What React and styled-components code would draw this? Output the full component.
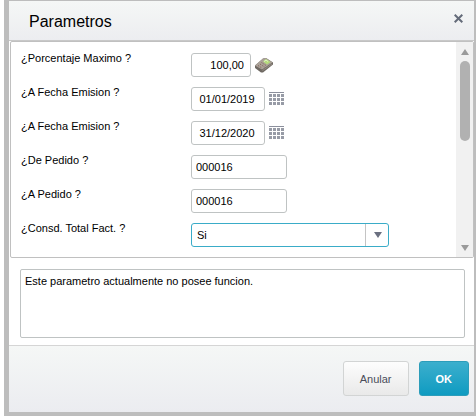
import React, {useState} from 'react'
import styled, {createGlobalStyle} from 'styled-components'

const GlobalStyle = createGlobalStyle`
  * {
    box-sizing: border-box;
  }
  body {
    margin: 0;
    background: #fff;
    color: #000;
    font-family: 'Liberation Sans', Arial, sans-serif;
    font-size: 11px;
  }
  button, input, select, textarea {
    margin: 0;
    color: inherit;
    font: inherit;
    outline: none;
  }
`

const Dialog = styled.div`
  margin-left: 4px;
  border: solid #bdbdbd;
  border-width: 1px 2px 4px 5px;
`

const Header = styled.header`
  display: flex;
  align-items: center;
  justify-content: space-between;
  height: 40px;
  padding: 2px 11px 0 20px;
  border-bottom: 1px solid #c8c8c8;
  background: linear-gradient(#f5f7f6, #ecedf0);
`

const Title = styled.h1`
  margin: 0;
  font-size: 16px;
  font-weight: normal;
  line-height: 20px;
`

const CloseButton = styled.button`
  display: flex;
  padding: 0 0 6px;
  border: 0;
  background: none;
  cursor: pointer;
`

const Params = styled.div`
  display: flex;
  margin-left: 1px;
  border: 1px solid #c0c0c0;
  border-radius: 2px;
`

const Fields = styled.form`
  display: flex;
  flex: 1;
  flex-direction: column;
  gap: 10px;
  min-width: 0;
  padding: 11px 10px 10px;
`

const Row = styled.div`
  display: grid;
  grid-template-columns: 170px 1fr;
`

const Label = styled.label`
  line-height: 10px;
`

const Control = styled.div`
  display: flex;
  align-items: center;
  gap: 4px;
`

const TextInput = styled.input`
  width: ${props => props.$width}px;
  height: 24px;
  padding: 0 6px 0 4px;
  border: 1px solid #bfc3c3;
  border-radius: 3px;
  background: #fff;
  text-align: ${props => props.$align || 'left'};
`

const IconButton = styled.button`
  display: flex;
  padding: 0;
  border: 0;
  background: none;
  cursor: pointer;
`

const SelectBox = styled.div`
  display: grid;
  grid-template-columns: 1fr 23px;
  width: 198px;
  height: 24px;
  border: 1px solid #3aacc8;
  border-radius: 3px;
`

const Select = styled.select`
  grid-area: 1 / 1 / 2 / 3;
  padding: 0 5px;
  border: 0;
  background: none;
  appearance: none;
`

const SelectArrow = styled.span`
  display: flex;
  grid-area: 1 / 2 / 2 / 3;
  align-items: center;
  justify-content: center;
  padding-left: 2px;
  border-left: 1px solid #c4c4c4;
  pointer-events: none;
`

const ScrollBar = styled.div`
  display: flex;
  flex-direction: column;
  align-items: center;
  width: 17px;
  background: #f1f1f1;
`

const ScrollButton = styled.button`
  display: flex;
  align-items: center;
  justify-content: center;
  width: 17px;
  height: 19px;
  padding: 0;
  border: 0;
  background: none;
`

const ScrollTrack = styled.div`
  flex: 1;
`

const ScrollThumb = styled.div`
  width: 10px;
  height: 80px;
  border-radius: 5px;
  background: #b1b1b1;
`

const Description = styled.div`
  padding: 11px 9px 7px 11px;
`

const DescriptionText = styled.textarea`
  display: block;
  width: 100%;
  height: 69px;
  padding: 5px 4px;
  border: 1px solid #bfc3c3;
  border-radius: 2px;
  line-height: 12px;
  resize: none;
`

const Footer = styled.footer`
  display: flex;
  justify-content: flex-end;
  gap: 10px;
  padding: 15px 5px 16px;
  border-top: 1px solid #d5d5d5;
  background: linear-gradient(#f5f7f6, #ebecf0);
`

const Button = styled.button`
  height: 35px;
  padding: 0 16px;
  border: 1px solid ${props => (props.$primary ? '#2c9dba' : '#d2d4d4')};
  border-radius: 3px;
  background: ${props =>
    props.$primary
      ? 'linear-gradient(#3cafcd, #0f9bc1)'
      : 'linear-gradient(#fdfdfd, #e9e9e9)'};
  color: ${props => (props.$primary ? '#fff' : '#4a4e5a')};
  font-weight: ${props => (props.$primary ? 'bold' : 'normal')};
  cursor: pointer;
`

const CloseIcon = () => (
  <svg width="9" height="9" viewBox="0 0 9 9">
    <path d="M.7.7l7.6 7.6M8.3.7L.7 8.3" stroke="#646b79" strokeWidth="2" />
  </svg>
)

const Arrow = ({up, color}) => (
  <svg width="8" height="6" viewBox="0 0 8 6">
    <path d={up ? 'M0 6h8L4 0z' : 'M0 0h8L4 6z'} fill={color} />
  </svg>
)

const CalculatorIcon = () => (
  <svg width="18" height="16" viewBox="0 0 18 16">
    <path d="M0 8.5L8 1.5l3-.5 7 4.5v2L8 15.5H6L0 11z" fill="#6f6963" />
    <path d="M0 8.5L8 1.5l3-.5 6.5 4.5L7 12.5z" fill="#aaa198" />
    <path d="M8 4.5l3-2.5 4.5 3-3.5 2.5z" fill="#b5dc7c" />
    <path d="M9 4.5L11 3l2 1.5" stroke="#e4f3c8" fill="none" />
    <path
      d="M3 8.5l4 2.5M5 7l4.5 3M6.5 5.5L11 8.5"
      stroke="#87675c"
      strokeDasharray="1.2 1"
    />
    <path d="M7.5 13.5l9.5-6.5" stroke="#958d84" />
  </svg>
)

const CalendarIcon = () => (
  <svg width="16" height="14" viewBox="0 0 16 14">
    <path d="M0 .5h15" stroke="#8b8f9c" />
    {[2, 6, 10].map(y =>
      [0, 4, 8, 12].map(x => (
        <rect key={`${x}-${y}`} x={x} y={y} width="3" height="3" fill="#979ba6" />
      ))
    )}
  </svg>
)

const fields = [
  {
    id: 'porcentaje',
    label: '¿Porcentaje Maximo ?',
    value: '100,00',
    width: 60,
    align: 'right',
    icon: CalculatorIcon,
    iconLabel: 'Calculadora',
  },
  {
    id: 'fechaDesde',
    label: '¿A Fecha Emision ?',
    value: '01/01/2019',
    width: 74,
    align: 'center',
    icon: CalendarIcon,
    iconLabel: 'Calendario',
  },
  {
    id: 'fechaHasta',
    label: '¿A Fecha Emision ?',
    value: '31/12/2020',
    width: 74,
    align: 'center',
    icon: CalendarIcon,
    iconLabel: 'Calendario',
  },
  {id: 'dePedido', label: '¿De Pedido ?', value: '000016', width: 96},
  {id: 'aPedido', label: '¿A Pedido ?', value: '000016', width: 96},
]

const Field = ({field}) => {
  const [value, setValue] = useState(field.value)
  const Icon = field.icon
  return (
    <Row>
      <Label htmlFor={field.id}>{field.label}</Label>
      <Control>
        <TextInput
          id={field.id}
          value={value}
          onChange={e => setValue(e.target.value)}
          $width={field.width}
          $align={field.align}
        />
        {Icon && (
          <IconButton type="button" aria-label={field.iconLabel}>
            <Icon />
          </IconButton>
        )}
      </Control>
    </Row>
  )
}

const App = () => (
  <>
    <GlobalStyle />
    <Dialog role="dialog" aria-labelledby="titulo">
      <Header>
        <Title id="titulo">Parametros</Title>
        <CloseButton type="button" aria-label="Cerrar">
          <CloseIcon />
        </CloseButton>
      </Header>
      <Params>
        <Fields>
          {fields.map(field => (
            <Field key={field.id} field={field} />
          ))}
          <Row>
            <Label htmlFor="total">¿Consd. Total Fact. ?</Label>
            <SelectBox>
              <Select id="total" defaultValue="Si">
                <option>Si</option>
                <option>No</option>
              </Select>
              <SelectArrow>
                <Arrow color="#6b7080" />
              </SelectArrow>
            </SelectBox>
          </Row>
        </Fields>
        <ScrollBar>
          <ScrollButton type="button" aria-label="Subir">
            <Arrow up color="#9a9a9a" />
          </ScrollButton>
          <ScrollTrack>
            <ScrollThumb />
          </ScrollTrack>
          <ScrollButton type="button" aria-label="Bajar">
            <Arrow color="#9a9a9a" />
          </ScrollButton>
        </ScrollBar>
      </Params>
      <Description>
        <DescriptionText
          aria-label="Descripcion"
          readOnly
          value="Este parametro actualmente no posee funcion."
        />
      </Description>
      <Footer>
        <Button type="button">Anular</Button>
        <Button type="button" $primary>
          OK
        </Button>
      </Footer>
    </Dialog>
  </>
)

export default App
